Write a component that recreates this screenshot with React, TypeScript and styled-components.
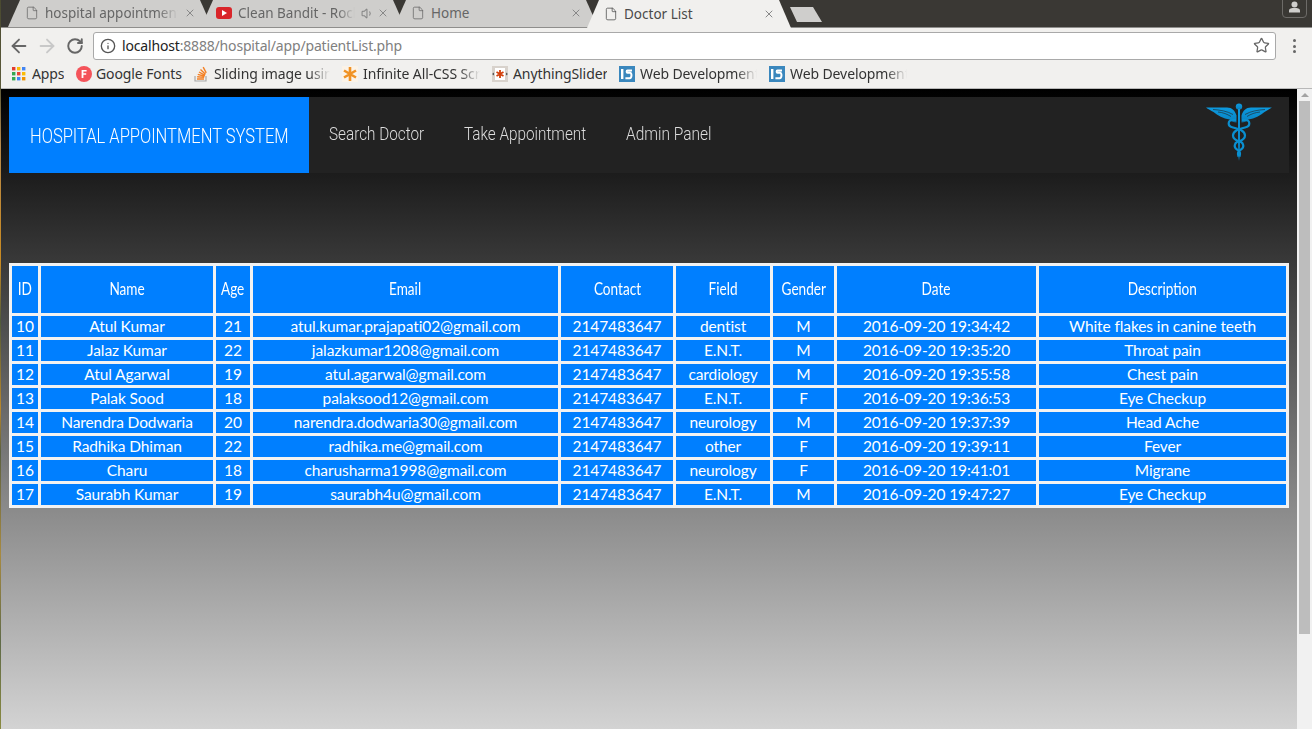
import React from "react";
import styled, { createGlobalStyle } from "styled-components";
import { ArrowLeft, ArrowRight, RotateCw, Info, Star, File, X, Volume1 } from "lucide-react";

const Global = createGlobalStyle`
  html, body { margin: 0; padding: 0; height: 100%; overflow: hidden; }
  #root { height: 100%; }
  * { box-sizing: border-box; }
`;

const Browser = styled.div`
  width: 1312px;
  height: 729px;
  display: flex;
  flex-direction: column;
  font-family: "Noto Sans", "Open Sans", sans-serif;
  overflow: hidden;
  background: #f1f0ee;
  position: relative;
`;

const WallpaperSliver = styled.div`
  position: absolute;
  left: 0;
  top: 0;
  bottom: 0;
  width: 1px;
  z-index: 5;
  background: linear-gradient(
    to bottom,
    #4a4a30 0,
    #5c5a3a 12%,
    #b98a4a 20%,
    #c98a20 36%,
    #4f5a3a 44%,
    #b8862a 56%,
    #5a6040 62%,
    #a88a40 76%,
    #5f6a48 88%,
    #8a8a40 100%
  );
`;

const TabStrip = styled.div`
  height: 28px;
  flex: none;
  display: flex;
  background: #3a3834;
  padding-left: 8px;
  position: relative;
  border-bottom: 1px solid #8f8e8c;
`;

const TabOuter = styled.div<{ $active?: boolean }>`
  width: 204px;
  height: ${(p) => (p.$active ? 28 : 27)}px;
  flex: none;
  margin-right: -11px;
  padding: 0 16px 1px 17px;
  display: flex;
  align-items: center;
  gap: 6px;
  position: relative;
  z-index: ${(p) => (p.$active ? 2 : 1)};
  background: ${(p) => (p.$active ? "#f1f0ee" : "#cfcecc")};
  clip-path: polygon(12px 0, calc(100% - 12px) 0, 100% 100%, 0 100%);
  color: ${(p) => (p.$active ? "#4a4a4a" : "#666")};
`;

const TabTitle = styled.span<{ $fade?: boolean }>`
  flex: 1;
  min-width: 0;
  white-space: nowrap;
  overflow: hidden;
  font-size: 13.5px;
  ${(p) =>
    p.$fade
      ? "-webkit-mask-image: linear-gradient(to right, #000 85%, transparent); mask-image: linear-gradient(to right, #000 85%, transparent);"
      : ""}
`;

const Speaker = styled(Volume1)`
  margin-right: -3px;
  flex: none;
`;

const NewTab = styled.div`
  width: 32px;
  height: 15px;
  margin: 7px 0 0 10px;
  background: #cfcecc;
  clip-path: polygon(0 0, 23px 0, 100% 100%, 7px 100%);
  flex: none;
`;

const ProfileButton = styled.div`
  position: absolute;
  right: 5px;
  top: -4px;
  width: 25px;
  height: 22px;
  border: 1px solid #6d6b68;
  border-radius: 4px;
  display: flex;
  align-items: center;
  justify-content: center;
`;

const Toolbar = styled.div`
  height: 32px;
  flex: none;
  display: flex;
  align-items: center;
  padding: 4px 0 0 8px;
  background: #f1f0ee;
`;

const NavIcons = styled.div`
  display: flex;
  align-items: center;
  gap: 6px;
  width: 85px;
  flex: none;
  margin-top: -1px;
  & > svg:last-child {
    margin-left: 2px;
  }
`;

const Omnibox = styled.div`
  width: 1183px;
  height: 28px;
  flex: none;
  background: #fff;
  border: 1px solid #a9a9a9;
  border-radius: 3px;
  display: flex;
  align-items: center;
  padding: 0 5px 1px 6px;
  gap: 6px;
  font-size: 14px;
  color: #808080;
`;

const Host = styled.span`
  color: #222;
`;

const Url = styled.span`
  flex: 1;
  white-space: nowrap;
  letter-spacing: -0.17px;
`;

const Kebab = styled.div`
  width: 3px;
  margin-left: 17px;
  display: flex;
  flex-direction: column;
  gap: 2.5px;
  & > i {
    display: block;
    width: 3px;
    height: 3px;
    background: #666;
    border-radius: 50%;
  }
`;

const Bookmarks = styled.div`
  height: 29px;
  flex: none;
  display: flex;
  align-items: center;
  padding: 0 0 1px 12px;
  background: #f1f0ee;
  border-bottom: 1px solid #b8b8b8;
`;

const Bookmark = styled.div<{ $w: number; $gap?: number }>`
  width: ${(p) => p.$w}px;
  flex: none;
  display: flex;
  align-items: center;
  gap: ${(p) => p.$gap ?? 5}px;
  padding-right: 12px;
  font-size: 14px;
  color: #333;
  white-space: nowrap;
  overflow: hidden;
`;

const BookmarkText = styled.span<{ $fade?: boolean }>`
  flex: 1;
  min-width: 0;
  overflow: hidden;
  letter-spacing: -0.1px;
  ${(p) =>
    p.$fade
      ? "-webkit-mask-image: linear-gradient(to right, #000 82%, transparent); mask-image: linear-gradient(to right, #000 82%, transparent);"
      : ""}
`;

const Viewport = styled.div`
  flex: 1;
  min-height: 0;
  display: flex;
`;

const Page = styled.main`
  flex: 1;
  min-width: 0;
  padding: 8px 8px 0 9px;
  background: linear-gradient(to bottom, #000 0, #d3d3d3 100%);
`;

const NavBar = styled.nav`
  height: 76px;
  display: flex;
  background: #222;
  color: #ddd;
  position: relative;
  width: 1280px;
`;

const Brand = styled.div`
  width: 300px;
  flex: none;
  background: #007fff;
  color: #fff;
  display: flex;
  align-items: center;
  padding: 2px 0 0 21px;
  font-family: Roboto, sans-serif;
  font-weight: 300;
  font-size: 20px;
  white-space: nowrap;
`;

const Narrow = styled.span<{ $x: number }>`
  display: inline-block;
  transform: scaleX(${(p) => p.$x});
  transform-origin: left center;
`;

const NavLink = styled.a<{ $w: number }>`
  width: ${(p) => p.$w}px;
  flex: none;
  display: flex;
  align-items: center;
  padding: 0 0 3px 20px;
  font-family: Roboto, sans-serif;
  font-weight: 300;
  font-size: 18px;
  white-space: nowrap;
`;

const LogoSlot = styled.div`
  position: absolute;
  right: 16px;
  top: 6px;
  width: 68px;
  height: 58px;
`;

const Grid = styled.table`
  width: 1279px;
  margin-top: 90px;
  table-layout: fixed;
  border-collapse: collapse;
  border: 3px solid #f2f2f2;
  font-family: Lato, sans-serif;
  color: #fff;
  font-size: 15.5px;
  letter-spacing: -0.1px;
`;

const Head = styled.th`
  height: 50px;
  padding: 0 0 2px;
  background: #007fff;
  border: 3px solid #f2f2f2;
  font-weight: 400;
  text-align: center;
  font-size: 17px;
  letter-spacing: 0;
  white-space: nowrap;
`;

const HeadLabel = styled.span`
  display: inline-block;
  transform: scaleX(0.8);
  transform-origin: center;
`;

const Cell = styled.td`
  height: 24px;
  padding: 0 0 2px;
  background: #007fff;
  border: 3px solid #f2f2f2;
  text-align: center;
  line-height: 18px;
  white-space: nowrap;
`;

const Scrollbar = styled.div`
  width: 15px;
  flex: none;
  background: #f1f1f1;
  padding: 4px 2px 0;
  display: flex;
  flex-direction: column;
  align-items: center;
`;

const ArrowUp = styled.div`
  width: 0;
  height: 0;
  border-left: 4px solid transparent;
  border-right: 4px solid transparent;
  border-bottom: 4px solid #a3a3a3;
  margin-bottom: 4px;
`;

const Thumb = styled.div`
  width: 11px;
  height: 533px;
  background: #bdbdbd;
`;

const columns = [29, 175, 37, 308, 115, 97, 64, 202, 250];
const headers = ["ID", "Name", "Age", "Email", "Contact", "Field", "Gender", "Date", "Description"];
const rows = [
  ["10", "Atul Kumar", "21", "atul.kumar.prajapati02@gmail.com", "2147483647", "dentist", "M", "2016-09-20 19:34:42", "White flakes in canine teeth"],
  ["11", "Jalaz Kumar", "22", "jalazkumar1208@gmail.com", "2147483647", "E.N.T.", "M", "2016-09-20 19:35:20", "Throat pain"],
  ["12", "Atul Agarwal", "19", "atul.agarwal@gmail.com", "2147483647", "cardiology", "M", "2016-09-20 19:35:58", "Chest pain"],
  ["13", "Palak Sood", "18", "palaksood12@gmail.com", "2147483647", "E.N.T.", "F", "2016-09-20 19:36:53", "Eye Checkup"],
  ["14", "Narendra Dodwaria", "20", "narendra.dodwaria30@gmail.com", "2147483647", "neurology", "M", "2016-09-20 19:37:39", "Head Ache"],
  ["15", "Radhika Dhiman", "22", "radhika.me@gmail.com", "2147483647", "other", "F", "2016-09-20 19:39:11", "Fever"],
  ["16", "Charu", "18", "charusharma1998@gmail.com", "2147483647", "neurology", "F", "2016-09-20 19:41:01", "Migrane"],
  ["17", "Saurabh Kumar", "19", "saurabh4u@gmail.com", "2147483647", "E.N.T.", "M", "2016-09-20 19:47:27", "Eye Checkup"],
];

const YouTube = () => (
  <svg width="16" height="12" viewBox="0 0 16 12" style={{ flex: "none", marginLeft: -2 }}>
    <rect width="16" height="12" rx="3" fill="#d9252a" />
    <path d="M6 3l5 3-5 3z" fill="#fff" />
  </svg>
);

const AppsGrid = () => (
  <svg width="14" height="14" viewBox="0 0 14 14" style={{ flex: "none" }}>
    {["#e33b2e", "#fbbc05", "#4285f4", "#34a853", "#ea4335", "#fbbc05", "#34a853", "#4285f4", "#f09300"].map((c, i) => (
      <rect key={i} x={(i % 3) * 5} y={Math.floor(i / 3) * 5} width="3.4" height="3.4" fill={c} />
    ))}
  </svg>
);

const FontsIcon = () => (
  <svg width="16" height="16" viewBox="0 0 16 16" style={{ flex: "none" }}>
    <circle cx="8" cy="8" r="8" fill="#f4535a" />
    <path d="M5.6 12V4h5v1.5H7.4v1.8h2.8v1.5H7.4V12z" fill="#fff" />
  </svg>
);

const StackIcon = () => (
  <svg width="14" height="16" viewBox="0 0 14 16" style={{ flex: "none" }}>
    <path d="M1 10v5h11v-5" fill="none" stroke="#a9a9a9" strokeWidth="1.2" />
    <path d="M3 13h7M3.200 10.800l7 .6M3.800 8.400l6.800 1.800M5 6l6 3.400M6.500 3.500l5 4.700" stroke="#f48024" strokeWidth="1.4" fill="none" />
    <path d="M9.200 1.200l3 5.600" stroke="#f48024" strokeWidth="1.4" fill="none" />
  </svg>
);

const Asterisk = () => (
  <svg width="16" height="16" viewBox="0 0 16 16" style={{ flex: "none" }}>
    <rect width="16" height="16" fill="#fbf3e8" />
    <path d="M8 1v14M2 4.5l12 7M14 4.5l-12 7" stroke="#f09224" strokeWidth="2.6" />
  </svg>
);

const SliderIcon = () => (
  <svg width="16" height="16" viewBox="0 0 16 16" style={{ flex: "none" }}>
    <rect width="16" height="16" fill="#d8d2cc" />
    <rect x="3" y="2" width="10" height="12" fill="#fff" />
    <path d="M8 4v8M4.5 6l7 4M11.5 6l-7 4" stroke="#d2400c" strokeWidth="1.8" />
    <path d="M0 8l2-1.5v3zM16 8l-2-1.5v3z" fill="#555" />
  </svg>
);

const WebDevIcon = () => (
  <svg width="16" height="16" viewBox="0 0 16 16" style={{ flex: "none" }}>
    <rect width="16" height="16" fill="#3a87bd" />
    <rect x="2" y="3" width="2.4" height="10" fill="#fff" />
    <path d="M13 4.6H8.4c-1 0-1 2.2 0 2.2h2.600c2 0 2 5.400-.4 5.400H6.400" fill="none" stroke="#fff" strokeWidth="2" />
  </svg>
);

const Profile = () => (
  <svg width="11" height="12" viewBox="0 0 11 12">
    <circle cx="5.5" cy="3.4" r="3" fill="#cfcecc" />
    <path d="M0 11.5V9.2c0-1.6 2.5-2.2 5.5-2.2s5.5.6 5.5 2.2v2.3z" fill="#cfcecc" />
  </svg>
);

const Caduceus = () => (
  <svg width="68" height="58" viewBox="0 0 68 58">
    <defs>
      <linearGradient id="cad" x1="0" y1="0" x2="0" y2="1">
        <stop offset="0" stopColor="#0c9ae0" />
        <stop offset="0.75" stopColor="#0a88c8" />
        <stop offset="1" stopColor="#0a6a9c" />
      </linearGradient>
    </defs>
    <g fill="url(#cad)">
      <circle cx="34" cy="3.6" r="3.2" />
      <rect x="33" y="6" width="2" height="44" />
      <path d="M33 50h2l-1 8z" />
      <path d="M1 4.500h21c5 0 8 3 9.500 8v7c-3 0-5-1-7-3-6-1-12-4-16-7.500C6 7.500 3 6 1 4.500z" />
      <path d="M67 4.500H46c-5 0-8 3-9.500 8v7c3 0 5-1 7-3 6-1 12-4 16-7.500 2.500-1.500 5-3 7.500-4.500z" />
    </g>
    <g fill="none" stroke="#222" strokeWidth="0.6">
      <path d="M8 6.500c7 .5 14 1.500 20 5M13 9c5 .5 9 2 13 4.500" />
      <path d="M60 6.500c-7 .5-14 1.500-20 5M55 9c-5 .5-9 2-13 4.500" />
    </g>
    <g fill="none" stroke="#0a8fd0" strokeWidth="2.2">
      <path d="M31 17h-3c-5.500 0-6 6 0 7.500 6 1.500 12 3 12 8s-6 5.500-8 6.500-4 5 0 7.500c3 1.500 4 3 2.500 7" />
      <path d="M37 17h3c5.500 0 6 6 0 7.500-6 1.500-12 3-12 8s6 5.500 8 6.500 4 5 0 7.500c-3 1.500-4 3-2.500 7" />
    </g>
  </svg>
);

export default function App() {
  return (
    <Browser>
      <Global />
      <WallpaperSliver />
      <TabStrip>
        <TabOuter>
          <File size={14} strokeWidth={1.3} />
          <TabTitle $fade>hospital appointment system</TabTitle>
          <X size={12} color="#888" strokeWidth={2} />
        </TabOuter>
        <TabOuter>
          <YouTube />
          <TabTitle $fade>Clean Bandit - Rockabye</TabTitle>
          <Speaker size={13} color="#888" />
          <X size={12} color="#888" strokeWidth={2} />
        </TabOuter>
        <TabOuter>
          <File size={14} strokeWidth={1.3} />
          <TabTitle>Home</TabTitle>
          <X size={12} color="#888" strokeWidth={2} />
        </TabOuter>
        <TabOuter $active>
          <File size={14} strokeWidth={1.3} />
          <TabTitle>Doctor List</TabTitle>
          <X size={12} color="#888" strokeWidth={2} />
        </TabOuter>
        <NewTab />
        <ProfileButton>
          <Profile />
        </ProfileButton>
      </TabStrip>
      <Toolbar>
        <NavIcons>
          <ArrowLeft size={22} color="#666" strokeWidth={2} />
          <ArrowRight size={22} color="#c8c8c8" strokeWidth={2} />
          <RotateCw size={18} color="#666" strokeWidth={2.6} />
        </NavIcons>
        <Omnibox>
          <Info size={16} color="#555" strokeWidth={2} />
          <Url>
            <Host>localhost</Host>:8888/hospital/app/patientList.php
          </Url>
          <Star size={17} color="#666" strokeWidth={1.8} />
        </Omnibox>
        <Kebab>
          <i />
          <i />
          <i />
        </Kebab>
      </Toolbar>
      <Bookmarks>
        <Bookmark $w={64} $gap={6}>
          <AppsGrid />
          <BookmarkText>Apps</BookmarkText>
        </Bookmark>
        <Bookmark $w={118} $gap={4}>
          <FontsIcon />
          <BookmarkText>Google Fonts</BookmarkText>
        </Bookmark>
        <Bookmark $w={148} $gap={6}>
          <StackIcon />
          <BookmarkText $fade>Sliding image using CSS</BookmarkText>
        </Bookmark>
        <Bookmark $w={150}>
          <Asterisk />
          <BookmarkText $fade>Infinite All-CSS Scroll</BookmarkText>
        </Bookmark>
        <Bookmark $w={127}>
          <SliderIcon />
          <BookmarkText>AnythingSlider</BookmarkText>
        </Bookmark>
        <Bookmark $w={150}>
          <WebDevIcon />
          <BookmarkText $fade>Web Development Tutorials</BookmarkText>
        </Bookmark>
        <Bookmark $w={150}>
          <WebDevIcon />
          <BookmarkText $fade>Web Development Tutorials</BookmarkText>
        </Bookmark>
      </Bookmarks>
      <Viewport>
        <Page>
          <NavBar>
            <Brand>
              <Narrow $x={0.826}>HOSPITAL APPOINTMENT SYSTEM</Narrow>
            </Brand>
            <NavLink $w={135}>
              <Narrow $x={0.85}>Search Doctor</Narrow>
            </NavLink>
            <NavLink $w={162}>
              <Narrow $x={0.85}>Take Appointment</Narrow>
            </NavLink>
            <NavLink $w={120}>
              <Narrow $x={0.86}>Admin Panel</Narrow>
            </NavLink>
            <LogoSlot>
              <Caduceus />
            </LogoSlot>
          </NavBar>
          <Grid>
            <colgroup>
              {columns.map((w, i) => (
                <col key={i} style={{ width: w }} />
              ))}
            </colgroup>
            <thead>
              <tr>
                {headers.map((h) => (
                  <Head key={h}>
                    <HeadLabel>{h}</HeadLabel>
                  </Head>
                ))}
              </tr>
            </thead>
            <tbody>
              {rows.map((r) => (
                <tr key={r[0]}>
                  {r.map((c, i) => (
                    <Cell key={i}>{c}</Cell>
                  ))}
                </tr>
              ))}
            </tbody>
          </Grid>
        </Page>
        <Scrollbar>
          <ArrowUp />
          <Thumb />
        </Scrollbar>
      </Viewport>
    </Browser>
  );
}
